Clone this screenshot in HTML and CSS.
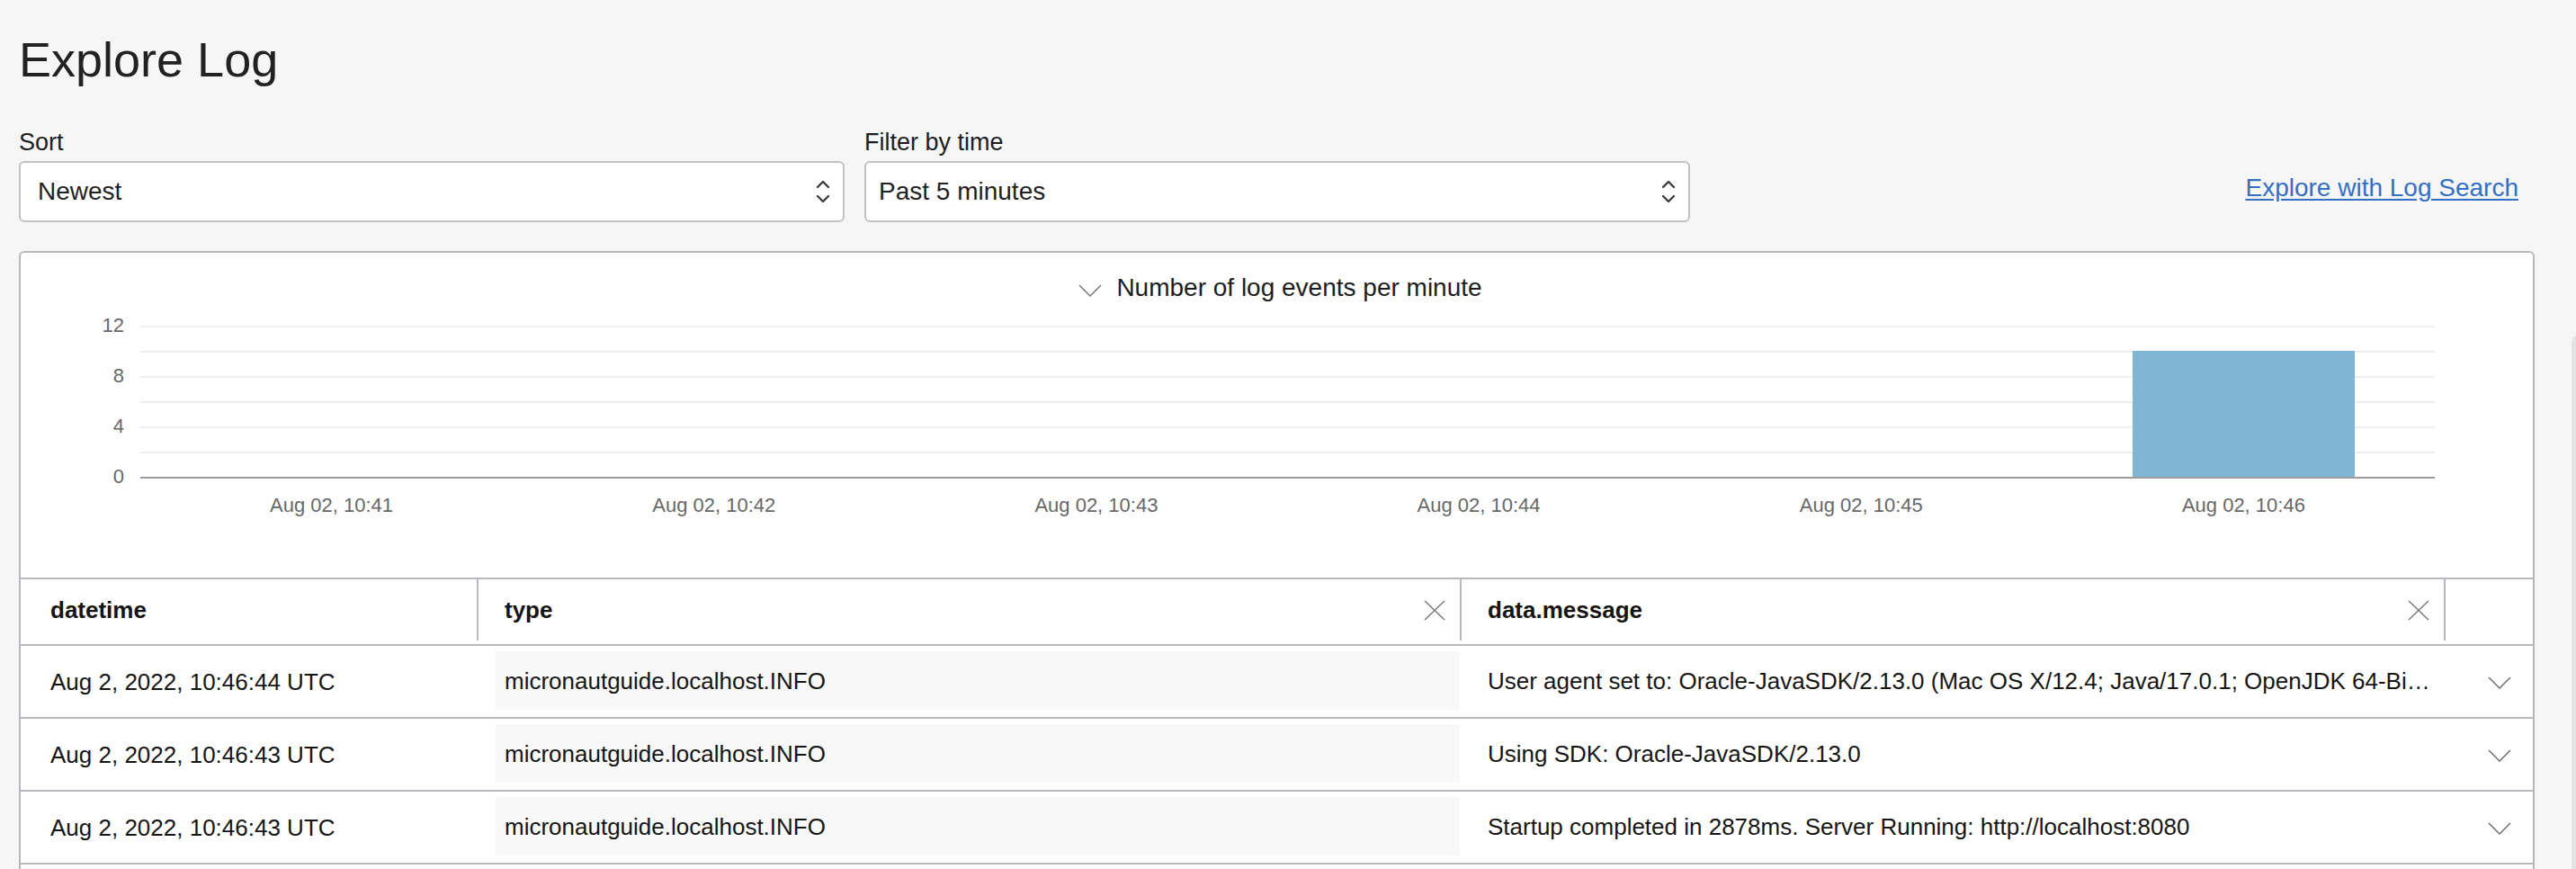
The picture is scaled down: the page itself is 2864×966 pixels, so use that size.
FILE: index.html
```html
<!DOCTYPE html>
<html lang="en">
<head>
<meta charset="utf-8">
<title>Explore Log</title>
<link rel="stylesheet" href="styles.css">
</head>
<body>
<main class="page">
  <h1 class="page-title">Explore Log</h1>

  <div class="controls">
    <div class="field">
      <label class="field-label">Sort</label>
      <div class="select select-sort">
        <span class="select-value">Newest</span>
        <svg class="select-arrows" width="16" height="28" viewBox="0 0 16 28"><path d="M2 9 L8 3 L14 9 M2 19 L8 25 L14 19" fill="none" stroke="#3c3c3c" stroke-width="2.4" stroke-linecap="round" stroke-linejoin="round"/></svg>
      </div>
    </div>
    <div class="field">
      <label class="field-label">Filter by time</label>
      <div class="select select-time">
        <span class="select-value">Past 5 minutes</span>
        <svg class="select-arrows" width="16" height="28" viewBox="0 0 16 28"><path d="M2 9 L8 3 L14 9 M2 19 L8 25 L14 19" fill="none" stroke="#3c3c3c" stroke-width="2.4" stroke-linecap="round" stroke-linejoin="round"/></svg>
      </div>
    </div>
    <a class="search-link" href="#">Explore with Log Search</a>
  </div>

  <section class="panel">
    <div class="chart">
      <div class="chart-title">
        <svg class="chevron" width="26" height="14" viewBox="0 0 26 14"><path d="M1 1 L13 13 L25 1" fill="none" stroke="#7a7a7a" stroke-width="1.5"/></svg>
        <span>Number of log events per minute</span>
      </div>
      <div class="chart-body">
        <div class="y-axis">
          <span>12</span><span>8</span><span>4</span><span>0</span>
        </div>
        <div class="plot">
          <div class="band"></div>
          <div class="band"></div>
          <div class="band"></div>
          <div class="band"></div>
          <div class="band"></div>
          <div class="band"><div class="bar" style="height:140px"></div></div>
        </div>
        <div class="y-spacer"></div>
        <div class="x-axis">
          <span>Aug 02, 10:41</span>
          <span>Aug 02, 10:42</span>
          <span>Aug 02, 10:43</span>
          <span>Aug 02, 10:44</span>
          <span>Aug 02, 10:45</span>
          <span>Aug 02, 10:46</span>
        </div>
      </div>
    </div>

    <div class="table">
      <div class="thead">
        <div class="th th-first">datetime</div>
        <div class="th th-div"><span>type</span>
          <svg class="close" width="24" height="23" viewBox="0 0 24 23"><path d="M1 1 L23 22 M23 1 L1 22" fill="none" stroke="#7a7a7a" stroke-width="1.5"/></svg>
        </div>
        <div class="th th-div"><span>data.message</span>
          <svg class="close" width="24" height="23" viewBox="0 0 24 23"><path d="M1 1 L23 22 M23 1 L1 22" fill="none" stroke="#7a7a7a" stroke-width="1.5"/></svg>
        </div>
        <div class="th th-div"></div>
      </div>

      <div class="tr">
        <div class="td td-date">Aug 2, 2022, 10:46:44 UTC</div>
        <div class="td td-type"><div class="type-box">micronautguide.localhost.INFO</div></div>
        <div class="td td-msg">User agent set to: Oracle-JavaSDK/2.13.0 (Mac OS X/12.4; Java/17.0.1; OpenJDK 64-Bit Server VM/17.0.1+12-LTS)</div>
        <div class="td td-exp"><svg width="26" height="14" viewBox="0 0 26 14"><path d="M1 1 L13 13 L25 1" fill="none" stroke="#707070" stroke-width="1.5"/></svg></div>
      </div>
      <div class="tr">
        <div class="td td-date">Aug 2, 2022, 10:46:43 UTC</div>
        <div class="td td-type"><div class="type-box">micronautguide.localhost.INFO</div></div>
        <div class="td td-msg">Using SDK: Oracle-JavaSDK/2.13.0</div>
        <div class="td td-exp"><svg width="26" height="14" viewBox="0 0 26 14"><path d="M1 1 L13 13 L25 1" fill="none" stroke="#707070" stroke-width="1.5"/></svg></div>
      </div>
      <div class="tr">
        <div class="td td-date">Aug 2, 2022, 10:46:43 UTC</div>
        <div class="td td-type"><div class="type-box">micronautguide.localhost.INFO</div></div>
        <div class="td td-msg">Startup completed in 2878ms. Server Running: http://localhost:8080</div>
        <div class="td td-exp"><svg width="26" height="14" viewBox="0 0 26 14"><path d="M1 1 L13 13 L25 1" fill="none" stroke="#707070" stroke-width="1.5"/></svg></div>
      </div>
      <div class="tr tr-empty">
        <div class="td td-date"></div>
        <div class="td td-type"><div class="type-box"></div></div>
        <div class="td td-msg"></div>
        <div class="td td-exp"></div>
      </div>
    </div>
  </section>
</main>
<div class="scroll-thumb"></div>
</body>
</html>
```

FILE: styles.css
```css
* { box-sizing: border-box; }

html, body {
  margin: 0;
  height: 100%;
}

body {
  background: #f6f6f6;
  font-family: "Liberation Sans", Arial, Helvetica, sans-serif;
  color: #1d1d1d;
  overflow: hidden;
}

.page {
  width: 2818px;
  padding: 35px 0 0 21px;
}

.page-title {
  margin: 0;
  font-size: 54px;
  line-height: 62px;
  font-weight: 400;
  color: #222;
}

.controls {
  display: flex;
  align-items: flex-end;
  gap: 22px;
  margin-top: 45px;
}

.field {
  display: flex;
  flex-direction: column;
  gap: 5px;
  width: 918px;
}

.field-label {
  font-size: 27px;
  line-height: 32px;
  color: #1d1d1d;
}

.select {
  height: 68px;
  border: 2px solid #bfc2c6;
  border-radius: 6px;
  background: #fff;
  display: flex;
  align-items: center;
  justify-content: space-between;
  padding-right: 14px;
}

.select-sort { padding-left: 19px; }
.select-time { padding-left: 14px; }

.select-value {
  font-size: 28px;
  line-height: 32px;
  color: #222;
}

.select-arrows { display: block; }

.search-link {
  margin-left: auto;
  margin-right: 18px;
  margin-bottom: 22px;
  font-size: 28px;
  line-height: 32px;
  color: #336fc4;
  text-decoration: underline;
  text-underline-offset: 3px;
}

.panel {
  margin-top: 32px;
  background: #fff;
  border: 2px solid #b5b9bd;
  border-bottom: none;
  border-radius: 6px 6px 0 0;
}

.chart {
  padding: 23px 0 67px;
}

.chart-title {
  display: flex;
  align-items: center;
  justify-content: center;
  gap: 16px;
  font-size: 28px;
  line-height: 32px;
  color: #1d1d1d;
  padding-left: 8px;
}

.chart-title .chevron { margin-top: 6px; }

.chart-body {
  margin-top: 26px;
  display: grid;
  grid-template-columns: 133px 2551px;
}

.y-axis {
  height: 190px;
  margin-top: -11px;
  margin-bottom: -20px;
  display: flex;
  flex-direction: column;
  justify-content: space-between;
  align-items: flex-end;
  padding-right: 18px;
  font-size: 22px;
  line-height: 22px;
  color: #686868;
}

.plot {
  height: 170px;
  display: grid;
  grid-template-columns: repeat(6, 1fr);
  border-bottom: 2px solid #9c9c9c;
  background: repeating-linear-gradient(to bottom, #eceef1 0, #eceef1 2px, transparent 2px, transparent 28px);
}

.band {
  display: flex;
  align-items: flex-end;
  justify-content: center;
}

.bar {
  width: 58.1%;
  background: #7fb5d5;
}

.x-axis {
  display: grid;
  grid-template-columns: repeat(6, 1fr);
  margin-top: 17px;
  font-size: 22px;
  line-height: 26px;
  color: #686868;
  text-align: center;
}

.table {
  font-size: 26px;
  line-height: 30px;
  color: #161513;
}

.thead {
  display: grid;
  grid-template-columns: 507px 1093px 1094px 1fr;
  border-top: 2px solid #b5b9bd;
  border-bottom: 2px solid #b5b9bd;
  padding-bottom: 4px;
  font-weight: 700;
}

.th {
  height: 68px;
  display: flex;
  align-items: center;
  justify-content: space-between;
}

.th-first { padding-left: 33px; }

.th-div {
  border-left: 2px solid #b5b9bd;
  padding-left: 29px;
  padding-right: 16px;
}

.close { display: block; }

.tr {
  display: grid;
  grid-template-columns: 507px 1093px 1094px 1fr;
  height: 81px;
  border-bottom: 2px solid #b5b9bd;
}

.td {
  display: flex;
  align-items: center;
  white-space: nowrap;
}

.td-date { padding-left: 33px; }

.td-type {
  padding: 6px 0 8px 21px;
  align-items: stretch;
}

.type-box {
  flex: 1;
  background: #f8f8f8;
  padding-left: 10px;
  display: flex;
  align-items: center;
}

.td-msg {
  display: block;
  padding: 0 11px 0 31px;
  line-height: 79px;
  overflow: hidden;
  text-overflow: ellipsis;
}

.td-exp {
  justify-content: flex-end;
  padding-right: 24px;
  padding-top: 2px;
}

.td-exp svg { display: block; }

.scroll-thumb {
  position: absolute;
  left: 2859px;
  top: 373px;
  width: 14px;
  height: 640px;
  border-radius: 7px;
  background: #e3e3e3;
}
```
